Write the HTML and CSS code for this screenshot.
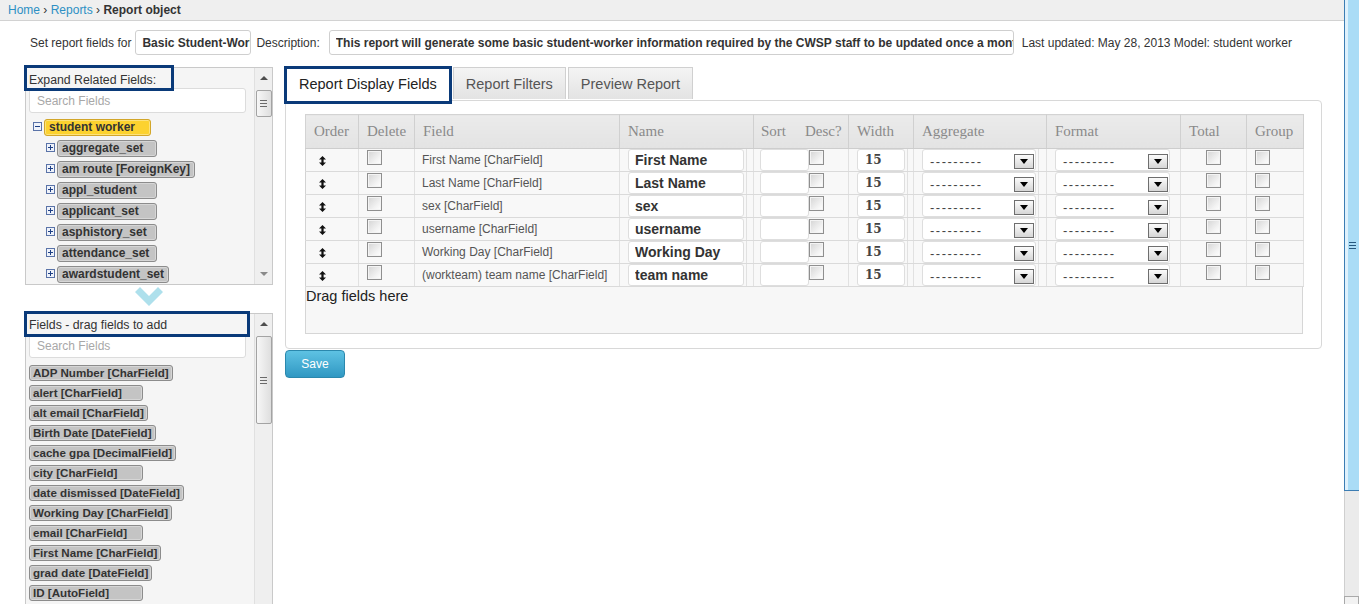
FILE: index.html
```html
<!DOCTYPE html>
<html>
<head>
<meta charset="utf-8">
<title>Report object</title>
<link rel="stylesheet" href="styles.css">
</head>
<body>
<div class="window">
  <div class="page">
    <div class="crumbs"><a href="#">Home</a> › <a href="#">Reports</a> › <b>Report object</b></div>

    <div class="meta">
      <span>Set report fields for</span>
      <input class="meta-in name-in" value="Basic Student-Worker Information" readonly>
      <span class="desc-label">Description:</span>
      <input class="meta-in desc-in" value="This report will generate some basic student-worker information required by the CWSP staff to be updated once a month" readonly>
      <span class="updated">Last updated: May 28, 2013 Model: student worker</span>
    </div>

    <div class="main">
      <aside class="sidebar">
        <div class="panel related">
          <div class="panel-body">
            <div class="panel-title title-related">Expand Related Fields:</div>
            <input class="search" placeholder="Search Fields">
            <div class="clip">
              <ul class="tree">
                <li class="node root">
                  <svg class="tg" width="9" height="9" viewBox="0 0 9 9"><rect x="0.5" y="0.5" width="8" height="8" fill="#eef2fa" stroke="#5a73a8"/><path d="M2 4.5h5" stroke="#1d3f85"/></svg>
                  <span class="tlabel yellow">student worker</span>
                </li>
                <li class="node child"><svg class="tg" width="9" height="9" viewBox="0 0 9 9"><rect x="0.5" y="0.5" width="8" height="8" fill="#eef2fa" stroke="#5a73a8"/><path d="M2 4.5h5M4.5 2v5" stroke="#1d3f85"/></svg><span class="tlabel">aggregate_set</span></li>
                <li class="node child"><svg class="tg" width="9" height="9" viewBox="0 0 9 9"><rect x="0.5" y="0.5" width="8" height="8" fill="#eef2fa" stroke="#5a73a8"/><path d="M2 4.5h5M4.5 2v5" stroke="#1d3f85"/></svg><span class="tlabel">am route [ForeignKey]</span></li>
                <li class="node child"><svg class="tg" width="9" height="9" viewBox="0 0 9 9"><rect x="0.5" y="0.5" width="8" height="8" fill="#eef2fa" stroke="#5a73a8"/><path d="M2 4.5h5M4.5 2v5" stroke="#1d3f85"/></svg><span class="tlabel">appl_student</span></li>
                <li class="node child"><svg class="tg" width="9" height="9" viewBox="0 0 9 9"><rect x="0.5" y="0.5" width="8" height="8" fill="#eef2fa" stroke="#5a73a8"/><path d="M2 4.5h5M4.5 2v5" stroke="#1d3f85"/></svg><span class="tlabel">applicant_set</span></li>
                <li class="node child"><svg class="tg" width="9" height="9" viewBox="0 0 9 9"><rect x="0.5" y="0.5" width="8" height="8" fill="#eef2fa" stroke="#5a73a8"/><path d="M2 4.5h5M4.5 2v5" stroke="#1d3f85"/></svg><span class="tlabel">asphistory_set</span></li>
                <li class="node child"><svg class="tg" width="9" height="9" viewBox="0 0 9 9"><rect x="0.5" y="0.5" width="8" height="8" fill="#eef2fa" stroke="#5a73a8"/><path d="M2 4.5h5M4.5 2v5" stroke="#1d3f85"/></svg><span class="tlabel">attendance_set</span></li>
                <li class="node child"><svg class="tg" width="9" height="9" viewBox="0 0 9 9"><rect x="0.5" y="0.5" width="8" height="8" fill="#eef2fa" stroke="#5a73a8"/><path d="M2 4.5h5M4.5 2v5" stroke="#1d3f85"/></svg><span class="tlabel">awardstudent_set</span></li>
              </ul>
            </div>
          </div>
          <div class="sbar">
            <div class="sarrow"><span class="tri-up"></span></div>
            <div class="sthumb thumb-related"><i></i><i></i><i></i></div>
            <div class="sfill"></div>
            <div class="sarrow"><span class="tri-down"></span></div>
          </div>
        </div>

        <div class="chevron"><svg width="28" height="19" viewBox="0 0 28 19"><path d="M0 5L5 0L14 9L23 0L28 5L14 19Z" fill="#aee0ec"/></svg></div>

        <div class="panel fields">
          <div class="panel-body">
            <div class="panel-title title-fields">Fields - drag fields to add</div>
            <input class="search search-fields" placeholder="Search Fields">
            <div class="clip">
              <div class="flist">
                <span class="fitem">ADP Number [CharField]</span>
                <span class="fitem">alert [CharField]</span>
                <span class="fitem">alt email [CharField]</span>
                <span class="fitem">Birth Date [DateField]</span>
                <span class="fitem">cache gpa [DecimalField]</span>
                <span class="fitem">city [CharField]</span>
                <span class="fitem">date dismissed [DateField]</span>
                <span class="fitem">Working Day [CharField]</span>
                <span class="fitem">email [CharField]</span>
                <span class="fitem">First Name [CharField]</span>
                <span class="fitem">grad date [DateField]</span>
                <span class="fitem">ID [AutoField]</span>
              </div>
            </div>
          </div>
          <div class="sbar">
            <div class="sarrow"><span class="tri-up"></span></div>
            <div class="sthumb thumb-fields"><i></i><i></i><i></i></div>
            <div class="sfill"></div>
          </div>
        </div>
      </aside>

      <section class="content">
        <div class="tabs">
          <div class="tab active">Report Display Fields</div>
          <div class="tab">Report Filters</div>
          <div class="tab">Preview Report</div>
        </div>
        <div class="tabpanel">
          <table class="grid">
            <colgroup>
              <col style="width:53px"><col style="width:56px"><col style="width:205px"><col style="width:127px"><col style="width:7px"><col style="width:95px"><col style="width:59px"><col style="width:6px"><col style="width:125px"><col style="width:8px"><col style="width:134px"><col style="width:66px"><col style="width:57px">
            </colgroup>
            <thead>
              <tr>
                <th>Order</th><th>Delete</th><th>Field</th><th colspan="2">Name</th><th class="th-sort">Sort<span class="desc-h">Desc?</span></th><th colspan="2">Width</th><th colspan="2">Aggregate</th><th>Format</th><th>Total</th><th>Group</th>
              </tr>
            </thead>
            <tbody>
              <tr>
                <td><svg class="ord" width="7" height="10" viewBox="0 0 7 10"><path d="M3.5 0L7 3.5H4.6V6.5H7L3.5 10L0 6.5H2.4V3.5H0Z" fill="#111"/></svg></td>
                <td><span class="cb cb-del"></span></td>
                <td class="c-field">First Name [CharField]</td>
                <td><input class="in in-name" value="First Name" readonly></td>
                <td></td>
                <td><div class="sortbox"><input class="in in-sort" readonly><span class="cb"></span></div></td>
                <td><input class="in in-width" value="15" readonly></td>
                <td></td>
                <td><div class="sel sel-agg"><span class="dash">---------</span><span class="dd"></span></div></td>
                <td></td>
                <td><div class="sel sel-fmt"><span class="dash">---------</span><span class="dd"></span></div></td>
                <td><span class="cb cb-total"></span></td>
                <td><span class="cb cb-del"></span></td>
              </tr>
              <tr>
                <td><svg class="ord" width="7" height="10" viewBox="0 0 7 10"><path d="M3.5 0L7 3.5H4.6V6.5H7L3.5 10L0 6.5H2.4V3.5H0Z" fill="#111"/></svg></td>
                <td><span class="cb cb-del"></span></td>
                <td class="c-field">Last Name [CharField]</td>
                <td><input class="in in-name" value="Last Name" readonly></td>
                <td></td>
                <td><div class="sortbox"><input class="in in-sort" readonly><span class="cb"></span></div></td>
                <td><input class="in in-width" value="15" readonly></td>
                <td></td>
                <td><div class="sel sel-agg"><span class="dash">---------</span><span class="dd"></span></div></td>
                <td></td>
                <td><div class="sel sel-fmt"><span class="dash">---------</span><span class="dd"></span></div></td>
                <td><span class="cb cb-total"></span></td>
                <td><span class="cb cb-del"></span></td>
              </tr>
              <tr>
                <td><svg class="ord" width="7" height="10" viewBox="0 0 7 10"><path d="M3.5 0L7 3.5H4.6V6.5H7L3.5 10L0 6.5H2.4V3.5H0Z" fill="#111"/></svg></td>
                <td><span class="cb cb-del"></span></td>
                <td class="c-field">sex [CharField]</td>
                <td><input class="in in-name" value="sex" readonly></td>
                <td></td>
                <td><div class="sortbox"><input class="in in-sort" readonly><span class="cb"></span></div></td>
                <td><input class="in in-width" value="15" readonly></td>
                <td></td>
                <td><div class="sel sel-agg"><span class="dash">---------</span><span class="dd"></span></div></td>
                <td></td>
                <td><div class="sel sel-fmt"><span class="dash">---------</span><span class="dd"></span></div></td>
                <td><span class="cb cb-total"></span></td>
                <td><span class="cb cb-del"></span></td>
              </tr>
              <tr>
                <td><svg class="ord" width="7" height="10" viewBox="0 0 7 10"><path d="M3.5 0L7 3.5H4.6V6.5H7L3.5 10L0 6.5H2.4V3.5H0Z" fill="#111"/></svg></td>
                <td><span class="cb cb-del"></span></td>
                <td class="c-field">username [CharField]</td>
                <td><input class="in in-name" value="username" readonly></td>
                <td></td>
                <td><div class="sortbox"><input class="in in-sort" readonly><span class="cb"></span></div></td>
                <td><input class="in in-width" value="15" readonly></td>
                <td></td>
                <td><div class="sel sel-agg"><span class="dash">---------</span><span class="dd"></span></div></td>
                <td></td>
                <td><div class="sel sel-fmt"><span class="dash">---------</span><span class="dd"></span></div></td>
                <td><span class="cb cb-total"></span></td>
                <td><span class="cb cb-del"></span></td>
              </tr>
              <tr>
                <td><svg class="ord" width="7" height="10" viewBox="0 0 7 10"><path d="M3.5 0L7 3.5H4.6V6.5H7L3.5 10L0 6.5H2.4V3.5H0Z" fill="#111"/></svg></td>
                <td><span class="cb cb-del"></span></td>
                <td class="c-field">Working Day [CharField]</td>
                <td><input class="in in-name" value="Working Day" readonly></td>
                <td></td>
                <td><div class="sortbox"><input class="in in-sort" readonly><span class="cb"></span></div></td>
                <td><input class="in in-width" value="15" readonly></td>
                <td></td>
                <td><div class="sel sel-agg"><span class="dash">---------</span><span class="dd"></span></div></td>
                <td></td>
                <td><div class="sel sel-fmt"><span class="dash">---------</span><span class="dd"></span></div></td>
                <td><span class="cb cb-total"></span></td>
                <td><span class="cb cb-del"></span></td>
              </tr>
              <tr>
                <td><svg class="ord" width="7" height="10" viewBox="0 0 7 10"><path d="M3.5 0L7 3.5H4.6V6.5H7L3.5 10L0 6.5H2.4V3.5H0Z" fill="#111"/></svg></td>
                <td><span class="cb cb-del"></span></td>
                <td class="c-field">(workteam) team name [CharField]</td>
                <td><input class="in in-name" value="team name" readonly></td>
                <td></td>
                <td><div class="sortbox"><input class="in in-sort" readonly><span class="cb"></span></div></td>
                <td><input class="in in-width" value="15" readonly></td>
                <td></td>
                <td><div class="sel sel-agg"><span class="dash">---------</span><span class="dd"></span></div></td>
                <td></td>
                <td><div class="sel sel-fmt"><span class="dash">---------</span><span class="dd"></span></div></td>
                <td><span class="cb cb-total"></span></td>
                <td><span class="cb cb-del"></span></td>
              </tr>
            </tbody>
          </table>
          <div class="dropzone">Drag fields here</div>
        </div>
        <button class="save">Save</button>
      </section>
    </div>
  </div>

  <div class="winbar">
    <div class="wthumb"><i></i><i></i><i></i></div>
    <div class="wtrack"></div>
    <div class="wbtn"></div>
  </div>
</div>
</body>
</html>
```

FILE: styles.css
```css
* { box-sizing: border-box; }

html, body {
  margin: 0;
  padding: 0;
  height: 604px;
  overflow: hidden;
  background: #fff;
}

body {
  font-family: "Liberation Sans", Arial, sans-serif;
  font-size: 12px;
  color: #333;
}

.window {
  display: flex;
  height: 604px;
}

.page {
  width: 1344px;
  flex: none;
}

/* breadcrumb */
.crumbs {
  height: 21px;
  background: #efefef;
  border-bottom: 1px solid #d2d2d2;
  padding: 3px 0 0 8px;
  line-height: 15px;
  color: #333;
}
.crumbs a { color: #2d8fc4; text-decoration: none; }
.crumbs b { font-weight: bold; color: #333; }

/* meta row */
.meta {
  display: flex;
  align-items: center;
  height: 25px;
  margin-top: 9px;
  padding-left: 30px;
  white-space: nowrap;
}
.meta-in {
  height: 25px;
  border: 1px solid #cfcfcf;
  border-radius: 3px;
  font: bold 12px "Liberation Sans", Arial, sans-serif;
  color: #333;
  padding: 0 0 0 6px;
  background: #fff;
  outline: none;
}
.name-in { width: 116px; margin-left: 4px; }
.desc-label { margin-left: 5px; }
.desc-in { width: 685px; margin-left: 9px; padding-left: 6px; }
.updated { margin-left: 8px; }

/* main layout */
.main {
  display: flex;
  align-items: flex-start;
  margin-top: 12px;
}

.sidebar {
  flex: none;
  width: 248px;
  margin-left: 25px;
}

.panel {
  display: flex;
  border: 1px solid #c9c9c9;
  background: #f5f5f5;
}
.panel.related { height: 218px; }
.panel.fields { height: 300px; margin-top: 7px; }

.panel-body {
  flex: 1;
  min-width: 0;
  display: flex;
  flex-direction: column;
}

.clip {
  flex: 1;
  min-height: 0;
  overflow: hidden;
}

.panel-title {
  position: relative;
  z-index: 1;
  flex: none;
  margin-left: 1px;
  padding-left: 2px;
  font-size: 12.3px;
  line-height: 14px;
  color: #333;
  outline: 3px solid #0a3a79;
  white-space: nowrap;
}
.title-related { width: 144px; height: 20px; padding-top: 5px; }
.title-fields { width: 220px; height: 20px; padding-top: 4px; }

.search {
  display: block;
  flex: none;
  width: 217px;
  height: 25px;
  margin-left: 3px;
  border: 1px solid #dcdcdc;
  border-radius: 3px;
  background: #fff;
  font: 12px "Liberation Sans", Arial, sans-serif;
  padding: 0 0 0 7px;
  color: #333;
  outline: none;
}
.search::placeholder { color: #a8a8a8; }
.search-fields { height: 24px; }

/* tree */
.tree {
  list-style: none;
  margin: 6px 0 0;
  padding: 0 0 0 7px;
}
.node {
  display: flex;
  align-items: flex-start;
  height: 21px;
  white-space: nowrap;
}
.node.child { padding-left: 13px; }
.tg { flex: none; margin-top: 3px; }
.tlabel {
  margin-left: 2px;
  min-width: 100px;
  height: 17px;
  padding: 0 4px;
  border: 1px solid #8c8c8c;
  border-radius: 3px;
  background: #c4c4c4;
  box-shadow: inset 0 0 0 1px #d6d6d6;
  font-weight: bold;
  font-size: 12px;
  line-height: 15px;
  color: #333;
}
.tlabel.yellow {
  min-width: 107px;
  background: #fcd22f;
  border-color: #d2a62a;
  box-shadow: inset 0 0 0 1px #fde27a;
}

/* mini scrollbars */
.sbar {
  flex: none;
  width: 18px;
  display: flex;
  flex-direction: column;
  align-items: center;
  background: #efefef;
  border-left: 1px solid #e0e0e0;
}
.sarrow {
  height: 20px;
  width: 100%;
  display: flex;
  align-items: center;
  justify-content: center;
  flex: none;
}
.tri-up {
  width: 0; height: 0;
  border-left: 4px solid transparent;
  border-right: 4px solid transparent;
  border-bottom: 4px solid #4d4d4d;
}
.tri-down {
  width: 0; height: 0;
  border-left: 4px solid transparent;
  border-right: 4px solid transparent;
  border-top: 4px solid #8a8a8a;
}
.sthumb {
  flex: none;
  width: 16px;
  margin-top: 2px;
  border: 1px solid #a3a3a3;
  border-radius: 2px;
  background: linear-gradient(to right, #f7f7f7, #dedede);
  display: flex;
  flex-direction: column;
  align-items: center;
  justify-content: center;
  gap: 2px;
}
.sthumb i {
  display: block;
  width: 7px;
  height: 1px;
  background: #6a6a6a;
}
.thumb-related { height: 27px; }
.thumb-fields { height: 88px; margin-top: 2px; }
.sfill { flex: 1; }

.chevron {
  height: 19px;
  margin: 2px 0 0 110px;
  line-height: 0;
}

/* fields list */
.flist {
  display: flex;
  flex-direction: column;
  align-items: flex-start;
  gap: 4px;
  margin: 7px 0 0 3px;
}
.fitem {
  min-width: 114px;
  height: 16px;
  padding: 0 3px;
  border: 1px solid #8c8c8c;
  border-radius: 3px;
  background: #c4c4c4;
  box-shadow: inset 0 0 0 1px #d6d6d6;
  font-weight: bold;
  font-size: 11.6px;
  line-height: 14px;
  color: #333;
  white-space: nowrap;
}

/* content */
.content {
  flex: none;
  width: 1037px;
  margin-left: 12px;
}

.tabs {
  display: flex;
  align-items: flex-start;
  height: 33px;
}
.tab {
  position: relative;
  height: 32px;
  padding: 8px 12px 0;
  margin-left: 2px;
  border: 1px solid #d0d0d0;
  border-bottom: none;
  background: linear-gradient(#f4f4f4, #e3e3e3);
  font-size: 14.5px;
  line-height: 17px;
  color: #555;
  white-space: nowrap;
}
.tab.active {
  z-index: 2;
  margin-left: 0;
  height: 36px;
  padding: 8px 13px 0;
  background: #fff;
  border-color: #cfcfcf;
  color: #222;
  outline: 3px solid #0a3a79;
  outline-offset: -2px;
}

.tabpanel {
  border: 1px solid #d8d8d8;
  border-radius: 0 4px 4px 4px;
  padding: 13px 18px 14px 19px;
}

.grid {
  width: 998px;
  table-layout: fixed;
  border-collapse: collapse;
  border: 1px solid #d3d3d3;
}
.grid th {
  height: 34px;
  padding: 0 0 0 8px;
  background: linear-gradient(#ebebeb, #e3e3e3);
  border-right: 1px solid #d0d0d0;
  border-bottom: 1px solid #cdcdcd;
  font: normal 15px "Liberation Serif", "Times New Roman", serif;
  color: #8a8a8a;
  text-align: left;
  white-space: nowrap;
}
.grid th.th-sort { padding-left: 7px; }
.desc-h { margin-left: 19px; }

.grid td {
  height: 23px;
  padding: 0;
  background: #f8f8f8;
  border-right: 1px solid #e1e1e1;
  border-bottom: 1px solid #dadada;
  vertical-align: top;
  white-space: nowrap;
}
.ord { display: block; margin: 7px 0 0 13px; }
.c-field {
  padding-left: 7px !important;
  line-height: 22px;
  color: #555;
  font-size: 12px;
  overflow: hidden;
}

.cb {
  display: block;
  width: 15px;
  height: 15px;
  margin-top: 1px;
  border: 1px solid #8f8f8f;
  background: linear-gradient(135deg, #d4d4d4 0%, #f2f2f2 65%, #fff 100%);
  box-shadow: inset 0 0 0 1px #f4f4f4;
  flex: none;
}
.cb-del { margin-left: 8px; }
.cb-total { margin-left: 25px; }

.in {
  display: block;
  height: 22px;
  border: 1px solid #dedede;
  border-radius: 3px;
  background: #fff;
  outline: none;
  padding: 0 0 0 6px;
  color: #333;
}
.in-name {
  width: 116px;
  margin-left: 8px;
  font: bold 14px "Liberation Sans", Arial, sans-serif;
}
.sortbox { display: flex; align-items: flex-start; margin-left: 6px; }
.in-sort { width: 49px; }
.in-width {
  width: 48px;
  margin-left: 8px;
  padding-left: 7px;
  font: bold 12px "DejaVu Serif", Georgia, serif;
  color: #444;
}

.sel {
  display: flex;
  align-items: center;
  justify-content: space-between;
  height: 22px;
  margin-left: 8px;
  padding: 0 1px 0 7px;
  border: 1px solid #dedede;
  border-radius: 3px;
  background: #fff;
}
.sel-agg { width: 114px; }
.sel-fmt { width: 115px; }
.dash {
  font-size: 13px;
  letter-spacing: 1.5px;
  color: #444;
  line-height: 14px;
  margin-top: 3px;
}
.dd {
  display: flex;
  align-items: center;
  justify-content: center;
  width: 20px;
  height: 15px;
  margin-top: 2px;
  border: 1px solid #6e6e6e;
  background: linear-gradient(#fbfbfb, #d6d6d6);
}
.dd::after {
  content: "";
  width: 0; height: 0;
  border-left: 4px solid transparent;
  border-right: 4px solid transparent;
  border-top: 5px solid #000;
}

.dropzone {
  height: 47px;
  border: 1px solid #d6d6d6;
  border-top: none;
  background: #f7f7f7;
  padding-top: 1px;
  font-size: 14.5px;
  line-height: 17px;
  color: #222;
}

.save {
  display: block;
  width: 60px;
  height: 28px;
  margin-top: 1px;
  padding: 0;
  border: 1px solid #2b88ad;
  border-radius: 4px;
  background: linear-gradient(#5ec2e3, #3098c3);
  color: #fff;
  font: 12px "Liberation Sans", Arial, sans-serif;
}

/* window scrollbar */
.winbar {
  flex: none;
  width: 15px;
  display: flex;
  flex-direction: column;
  background: #ebebeb;
}
.wthumb {
  height: 491px;
  flex: none;
  border-left: 1px solid #3c7db3;
  border-bottom: 1px solid #3c7db3;
  background: linear-gradient(to right, #dff1fc 0, #dff1fc 3px, #aadcf6 3px);
  display: flex;
  flex-direction: column;
  align-items: center;
  justify-content: center;
  gap: 2px;
}
.wthumb i {
  display: block;
  width: 7px;
  height: 1px;
  background: #27587f;
}
.wtrack {
  flex: 1;
  border-left: 1px solid #cfcfcf;
}
.wbtn {
  height: 8px;
  flex: none;
  border: 1px solid #a9a9a9;
  border-bottom: none;
  background: #f2f2f2;
}
```
